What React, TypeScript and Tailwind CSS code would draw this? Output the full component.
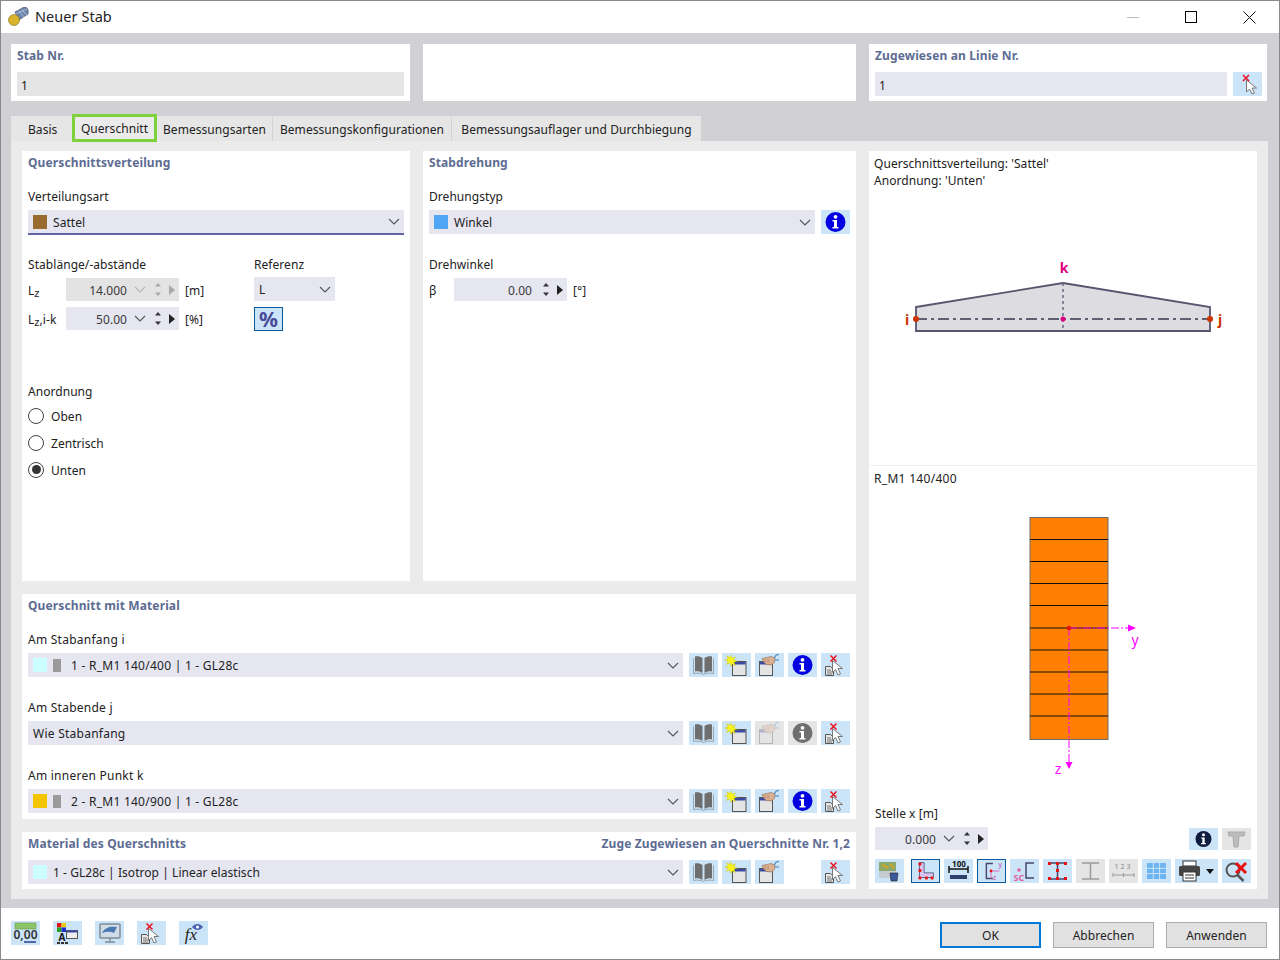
import React from "react";

const Chevron = ({ c = "#555" }: { c?: string }) => (
  <svg width="12" height="7" viewBox="0 0 12 7" className="shrink-0"><path d="M1 1l5 5 5-5" fill="none" stroke={c} strokeWidth="1.1" /></svg>
);

const Book = () => (
  <svg width="29" height="24" viewBox="0 0 29 24">
    <path d="M6 3.500C8.500 3 11.500 3.500 13.500 5V20C11.500 18.500 8.500 18 6 18.500z" fill="#6e6e6e" />
    <path d="M23 3.500C20.500 3 17.500 3.500 15.500 5V20C17.500 18.500 20.500 18 23 18.500z" fill="#6e6e6e" />
    <path d="M4.500 5.500V20.500C8 19.800 12 20 14.500 21.500 17 20 21 19.800 24.500 20.500V5.500" fill="none" stroke="#97a3ad" strokeWidth="1" />
  </svg>
);

const NewWin = () => (
  <svg width="29" height="24" viewBox="0 0 29 24">
    <rect x="10.500" y="8.500" width="13.500" height="14" fill="#e4e4e4" stroke="#555" />
    <rect x="11" y="9" width="12.500" height="2.500" fill="#3b4ba3" />
    <path d="M9 2l1.100 3.200 3.400-1.400-1.500 3.200 3.400 1.100-3.400 1.200 1.500 3.200-3.400-1.500L9 13.500 7.800 10 4.500 11.500 6 8.300 2.600 7.100 6 6 4.500 2.800l3.300 1.400z" fill="#f7f11d" stroke="#b9a90f" strokeWidth=".3" />
  </svg>
);

const EditWin = ({ off }: { off?: boolean }) => (
  <svg width="29" height="24" viewBox="0 0 29 24" opacity={off ? 0.32 : 1}>
    <rect x="4.500" y="8.500" width="13" height="14" fill="#e4e4e4" stroke="#555" />
    <rect x="5" y="9" width="12" height="2.500" fill="#3b4ba3" />
    <path d="M7 5.500l9-2 4 1.500-.5 4.500-3 2.500-5-.5-3-2.500z" fill="#dcae92" stroke="#8d6d58" strokeWidth=".6" />
    <path d="M10 6.500v3M13 6v3.500" stroke="#8d6d58" strokeWidth=".6" />
    <path d="M19.500 5c.5-2.500 2.500-3.500 4.500-3.500M20 7h4" stroke="#3f86c4" strokeWidth="1.200" fill="none" />
  </svg>
);

const Info = ({ c = "#0000e0", small }: { c?: string; small?: boolean }) => (
  <svg width="29" height="24" viewBox="0 0 29 24">
    <g transform={small ? "translate(2.900 2.400) scale(0.8)" : undefined}>
      <circle cx="14.500" cy="12" r="10" fill={c} />
      <circle cx="14.500" cy="6.800" r="1.900" fill="#fff" />
      <path d="M11.500 10h4.500v7h1.500v1.500h-6V17H13v-5.500h-1.500z" fill="#fff" />
    </g>
  </svg>
);

const CursorX = () => (
  <svg width="29" height="24" viewBox="0 0 29 24">
    <path d="M4.500 13.500h5l3 3v6h-8z" fill="#e8e8e8" stroke="#555" />
    <path d="M6 17h4M6 19h5M6 21h5" stroke="#555" strokeWidth=".8" />
    <path d="M11.500 7.500v12l3-3 2.500 5.500 2.500-1-2.500-5.500h4.500z" fill="#fff" stroke="#777" />
    <path d="M9.500 2.500l6 6M15.500 2.500l-6 6" stroke="#ee1122" strokeWidth="1.500" />
  </svg>
);

const Btn = ({ children, off, active, className = "" }: { children?: React.ReactNode; off?: boolean; active?: boolean; className?: string }) => (
  <div className={`w-[29px] h-[24px] shrink-0 flex items-center justify-center ${off ? "bg-[#e5e5e5]" : "bg-[#cce4f7]"} ${active ? "border border-[#0b5a9e]" : ""} ${className}`}>
    {children}
  </div>
);

const Combo = ({ children, className = "", underline }: { children: React.ReactNode; className?: string; underline?: boolean }) => (
  <div className={`h-[24px] bg-[#e6e6f1] flex items-center justify-between pr-[4px] ${underline ? "h-[25px] border-b-2 border-[#6264a7]" : ""} ${className}`}>
    <div className="flex items-center min-w-0 [&>span]:pt-[2px]">{children}</div>
    <Chevron />
  </div>
);

const Swatch = ({ c }: { c: string }) => <span className="block w-[14px] h-[14px] ml-[5px] mr-[6px]" style={{ background: c }} />;

const Spin = ({ value, off, noChevron }: { value: string; off?: boolean; noChevron?: boolean }) => {
  const c = off ? "#a9a9a9" : "#333";
  return (
    <div className={`w-[113px] h-[23px] flex items-center ${off ? "bg-[#e3e3e3]" : "bg-[#e6e6f1]"}`}>
      <span className={`${noChevron ? "w-[78px]" : "w-[61px]"} pt-[2px] text-right text-[#3a3a3a]`}>{value}</span>
      {!noChevron && <span className="ml-[7px]"><Chevron c={off ? "#b5b5b5" : "#555"} /></span>}
      <svg width="8" height="15" viewBox="0 0 8 15" className={noChevron ? "ml-[10px]" : "ml-[8px]"}>
        <path d="M4 1L7 4.500H1zM4 14L1 10.500H7z" fill={c} />
      </svg>
      <svg width="6" height="10" viewBox="0 0 6 10" className="ml-[7px]">
        <path d="M0 0l6 5-6 5z" fill={off ? "#a9a9a9" : "#222"} />
      </svg>
    </div>
  );
};

const Title = ({ children, className = "" }: { children: React.ReactNode; className?: string }) => (
  <div className={`h-[16px] leading-[18px] font-bold text-[#5d6c93] whitespace-nowrap tracking-[0.12px] ${className}`}>{children}</div>
);
const Label = ({ children, className = "" }: { children: React.ReactNode; className?: string }) => (
  <div className={`h-[16px] leading-[18px] ${className}`}>{children}</div>
);

const Radio = ({ label, on }: { label: string; on?: boolean }) => (
  <div className="h-[27px] flex items-center">
    <span className="w-[16px] h-[16px] rounded-full border border-[#444] flex items-center justify-center bg-white">
      {on && <span className="block w-[9px] h-[9px] rounded-full bg-[#333]" />}
    </span>
    <span className="ml-[7px] pt-[2px]">{label}</span>
  </div>
);

const MatRow = ({ label, children, editOff, first }: { label: string; children: React.ReactNode; editOff?: boolean; first?: boolean }) => (
  <div className={first ? "mt-[18px]" : "mt-[22px]"}>
    <Label className="tracking-[0.25px]">{label}</Label>
    <div className="flex gap-[4px] mt-[6px]">
      <Combo className="flex-1 mr-[2px] tracking-[0.25px]">{children}</Combo>
      <Btn><Book /></Btn>
      <Btn><NewWin /></Btn>
      <Btn off={editOff}><EditWin off={editOff} /></Btn>
      <Btn off={editOff}><Info c={editOff ? "#6f6f6f" : "#0000e0"} /></Btn>
      <Btn><CursorX /></Btn>
    </div>
  </div>
);

const Section = () => (
  <svg width="388" height="92" viewBox="0 0 388 92" className="block">
    <path d="M47 56L194 32 341 56V80H47z" fill="#dcdce1" stroke="#55566e" strokeWidth="1.800" />
    <path d="M47 68H341" stroke="#5f5f72" strokeWidth="1.800" strokeDasharray="11 4 3 4" />
    <path d="M194 32V80" stroke="#6a6a80" strokeWidth="1.500" strokeDasharray="3 3" />
    <circle cx="47" cy="68" r="3" fill="#cc3300" />
    <circle cx="341" cy="68" r="3" fill="#cc3300" />
    <circle cx="194" cy="68" r="2.500" fill="#e0007f" />
    <text x="195" y="22" textAnchor="middle" fontSize="14" fontWeight="700" fill="#e0007f">k</text>
    <text x="38" y="74" textAnchor="middle" fontSize="14" fontWeight="700" fill="#cc3300">i</text>
    <text x="351" y="74" textAnchor="middle" fontSize="14" fontWeight="700" fill="#cc3300">j</text>
  </svg>
);

const Profile = () => {
  const ys = [22.500, 44.500, 66.500, 88.500, 111, 133, 155, 177, 199];
  return (
    <svg width="388" height="270" viewBox="0 0 388 270" className="block">
      <rect x="161" y="0.500" width="78" height="222" fill="#ff8000" stroke="#6b6b6b" />
      {ys.map((y) => <path key={y} d={`M161 ${y}H239`} stroke="#111" strokeWidth="1" />)}
      <path d="M200 111H260" stroke="#f0f" strokeWidth="1" strokeDasharray="8 2 2 2" />
      <path d="M200 111V246" stroke="#f0f" strokeWidth="1" strokeDasharray="8 2 2 2" />
      <path d="M259 107.500l8 3.500-8 3.500zM196.500 245h7l-3.500 7z" fill="#f0f" />
      <circle cx="200" cy="111" r="2.200" fill="#e81010" />
      <text x="266" y="128" fontSize="14" fill="#f0f" textAnchor="middle" fontFamily="Noto Sans">y</text>
      <text x="189" y="257" fontSize="14" fill="#f0f" textAnchor="middle" fontFamily="Noto Sans">z</text>
    </svg>
  );
};

const Ico = ({ children }: { children: React.ReactNode }) => (
  <svg width="29" height="24" viewBox="0 0 29 24">{children}</svg>
);

function CursorXOnly() {
  return (
    <svg width="29" height="24" viewBox="0 0 29 24">
      <path d="M13.500 8v12l3-3 2.500 5 2.500-1-2.500-5h4.500z" fill="#fff" stroke="#777" />
      <path d="M10 3l6 6M16 3l-6 6" stroke="#ee1122" strokeWidth="1.500" />
    </svg>
  );
}

export default function App() {
  return (
    <div className="w-[1280px] h-[960px] flex flex-col border border-[#8a8a8a] bg-white overflow-hidden text-[12px] text-[#222] tracking-[0.05px] font-['Noto_Sans','Open_Sans',sans-serif]">
      {/* title bar */}
      <div className="h-[32px] shrink-0 flex items-center bg-white">
        <svg width="22" height="20" viewBox="0 0 22 20" className="ml-[7px]">
          <path d="M7 5l9-5c3-.5 5 3 4 7l-9 6z" fill="#6d86ad" stroke="#33415c" strokeWidth=".6" />
          <path d="M10 3l6 7M13 1.500l6 7M8 7l11-5" stroke="#c9d4e5" strokeWidth=".6" />
          <circle cx="6" cy="13" r="5.500" fill="#d9b52e" stroke="#7d6a1f" strokeWidth=".6" />
        </svg>
        <span className="ml-[5px] text-[14.500px] text-[#222]">Neuer Stab</span>
        <div className="ml-auto flex mr-px">
          <div className="w-[58px] h-[32px] flex items-center justify-center">
            <span className="block w-[12px] h-px bg-[#bdbdbd]" />
          </div>
          <div className="w-[58px] h-[32px] flex items-center justify-center">
            <span className="block w-[12px] h-[12px] border border-black" />
          </div>
          <div className="w-[58px] h-[32px] flex items-center justify-center">
            <svg width="13" height="13" viewBox="0 0 13 13"><path d="M.5.500l12 12M12.500.500l-12 12" stroke="#111" strokeWidth="1" /></svg>
          </div>
        </div>
      </div>

      {/* body */}
      <div className="flex-1 min-h-0 bg-[#d0d0d5] pl-[10px] pr-[11px] pt-[11px] pb-[9px] flex flex-col">
        <div className="grid grid-cols-[399px_433px_398px] gap-[13px] h-[57px] shrink-0">
          <div className="bg-white pl-[6px] pr-[5px] pt-[3px]">
            <Title className="tracking-[0.3px]">Stab Nr.</Title>
            <div className="mt-[9px] h-[24px] bg-[#e5e5e5] flex items-center pl-[4px] pt-[4px] mr-[1px]">1</div>
          </div>
          <div className="bg-white" />
          <div className="bg-white pl-[6px] pr-[5px] pt-[3px]">
            <Title className="tracking-[0.3px]">Zugewiesen an Linie Nr.</Title>
            <div className="mt-[9px] flex gap-[6px]">
              <div className="flex-1 h-[24px] bg-[#e6e6f1] flex items-center pl-[4px] pt-[4px]">1</div>
              <Btn><CursorXOnly /></Btn>
            </div>
          </div>
        </div>

        {/* tabs */}
        <div className="mt-[15px] h-[25px] shrink-0 flex">
          <div className="w-[61px] bg-[#e6e6e6] flex items-center pl-[17px] pt-[2px]">Basis</div>
          <div className="relative z-10 w-[85px] h-[28px] -mt-[2px] bg-[#ebebeb] border-[3px] border-[#7ed13b] flex items-center justify-center pt-[2px]">Querschnitt</div>
          <div className="w-[116px] bg-[#e6e6e6] border-r border-[#d4d4d4] flex items-center justify-center pt-[2px]">Bemessungsarten</div>
          <div className="w-[179px] bg-[#e6e6e6] border-r border-[#d4d4d4] flex items-center justify-center pt-[2px]">Bemessungskonfigurationen</div>
          <div className="w-[249px] bg-[#e6e6e6] flex items-center justify-center pt-[2px]">Bemessungsauflager und Durchbiegung</div>
        </div>

        {/* panel */}
        <div className="flex-1 min-h-0 bg-[#ebebeb] pl-[11px] pr-[10px] py-[10px] flex gap-[13px]">
          <div className="w-[834px] flex flex-col">
            <div className="h-[430px] flex gap-[13px]">
              {/* left */}
              <div className="w-[388px] bg-white px-[6px] pt-[3px]">
                <Title>Querschnittsverteilung</Title>
                <Label className="mt-[18px]">Verteilungsart</Label>
                <Combo underline className="mt-[6px]">
                  <Swatch c="#996a2f" /><span>Sattel</span>
                </Combo>
                <div className="flex mt-[21px]">
                  <div className="w-[226px]">
                    <Label>Stablänge/-abstände</Label>
                    <div className="flex items-center mt-[6px]">
                      <span className="w-[38px] pt-[2px]">L<sub className="text-[11px] align-baseline">z</sub></span>
                      <Spin value="14.000" off />
                      <span className="ml-[6px] pt-[2px]">[m]</span>
                    </div>
                    <div className="flex items-center mt-[6px]">
                      <span className="w-[38px] pt-[2px] whitespace-nowrap">L<sub className="text-[11px] align-baseline">z</sub>,i-k</span>
                      <Spin value="50.00" />
                      <span className="ml-[6px] pt-[2px]">[%]</span>
                    </div>
                  </div>
                  <div>
                    <Label>Referenz</Label>
                    <Combo className="w-[81px] mt-[5px]"><span className="pl-[5px]">L</span></Combo>
                    <Btn active className="mt-[6px]">
                      <span className="text-[21px] font-bold leading-none text-[#4a4a9a]">%</span>
                    </Btn>
                  </div>
                </div>
                <Label className="mt-[52px]">Anordnung</Label>
                <div className="mt-[3px]">
                  <Radio label="Oben" />
                  <Radio label="Zentrisch" />
                  <Radio label="Unten" on />
                </div>
              </div>
              {/* middle */}
              <div className="w-[433px] bg-white px-[6px] pt-[3px]">
                <Title>Stabdrehung</Title>
                <Label className="mt-[18px]">Drehungstyp</Label>
                <div className="flex gap-[6px] mt-[6px]">
                  <Combo className="flex-1"><Swatch c="#4fa6f5" /><span>Winkel</span></Combo>
                  <Btn><Info /></Btn>
                </div>
                <Label className="mt-[22px]">Drehwinkel</Label>
                <div className="flex items-center mt-[6px]">
                  <span className="w-[25px] pt-[2px]">β</span>
                  <Spin value="0.00" noChevron />
                  <span className="ml-[6px] pt-[2px]">[°]</span>
                </div>
              </div>
            </div>

            <div className="mt-[13px] h-[225px] bg-white px-[6px] pt-[3px]">
              <Title>Querschnitt mit Material</Title>
              <MatRow first label="Am Stabanfang i">
                <Swatch c="#ccffff" /><span className="block w-[8px] h-[13px] bg-[#9a9a9a] mr-[10px]" /><span>1 - R_M1 140/400 | 1 - GL28c</span>
              </MatRow>
              <MatRow label="Am Stabende j" editOff>
                <span className="pl-[5px]">Wie Stabanfang</span>
              </MatRow>
              <MatRow label="Am inneren Punkt k">
                <Swatch c="#f5c400" /><span className="block w-[8px] h-[13px] bg-[#9a9a9a] mr-[10px]" /><span>2 - R_M1 140/900 | 1 - GL28c</span>
              </MatRow>
            </div>

            <div className="mt-[13px] flex-1 bg-white px-[6px] pt-[3px]">
              <div className="flex justify-between">
                <Title>Material des Querschnitts</Title>
                <Title className="tracking-[0.2px]">Zuge Zugewiesen an Querschnitte Nr. 1,2</Title>
              </div>
              <div className="flex gap-[4px] mt-[9px]">
                <Combo className="flex-1 mr-[2px]"><Swatch c="#ccffff" /><span>1 - GL28c | Isotrop | Linear elastisch</span></Combo>
                <Btn><Book /></Btn>
                <Btn><NewWin /></Btn>
                <Btn><EditWin /></Btn>
                <div className="w-[29px]" />
                <Btn><CursorX /></Btn>
              </div>
            </div>
          </div>

          {/* right */}
          <div className="w-[388px] bg-white flex flex-col">
            <div className="h-[315px] border-b border-[#eeeeee] shrink-0">
              <div className="pl-[5px] pt-[4px] leading-[17px]">
                <div>Querschnittsverteilung: 'Sattel'</div>
                <div>Anordnung: 'Unten'</div>
              </div>
              <div className="mt-[62px]"><Section /></div>
            </div>
            <div className="pl-[5px] pt-[5px] h-[16px] leading-[16px] box-content tracking-[0.3px]">R_M1 140/400</div>
            <div className="mt-[30px]"><Profile /></div>
            <div className="pl-[6px] mt-[18px]">
              <Label>Stelle x [m]</Label>
              <div className="flex items-center mt-[6px] pr-[6px]">
                <Spin value="0.000" />
                <Btn className="ml-auto !h-[22px]"><Info c="#101b40" small /></Btn>
                <Btn off className="ml-[4px] !h-[22px]">
                  <svg width="29" height="24" viewBox="0 0 29 24"><path d="M6 5h17l-1 4h-5l-1 11h-4l-1-11H7z" fill="#bdbdbd" stroke="#ababab" /></svg>
                </Btn>
              </div>
              <div className="flex items-center mt-[9px] pr-[6px]">
                <Btn>
                  <Ico>
                    <rect x="4" y="3" width="17" height="16" fill="#8aa96a" /><rect x="4" y="12" width="17" height="7" fill="#c6cdd1" />
                    <path d="M7 6l6 3M15 5l4 4" stroke="#d2a52a" strokeWidth="2" />
                    <path d="M15 14h8l-1 8h-6z" fill="#3a5a9a" stroke="#222" strokeWidth=".6" />
                  </Ico>
                </Btn>
                <Btn active className="ml-[7px]">
                  <Ico><path d="M8 3h5v11h10v5H8z" fill="#d9c6ee" stroke="#3c3c70" strokeWidth=".8" />
                    <g fill="#e81010"><rect x="7" y="3" width="3" height="3" /><rect x="7" y="10" width="3" height="3" /><rect x="7" y="18" width="3" height="3" /><rect x="14" y="18" width="3" height="3" /><rect x="20" y="18" width="3" height="3" /></g></Ico>
                </Btn>
                <Btn className="ml-[4px]">
                  <Ico><path d="M5 10h19M5 7v7M24 7v7" stroke="#111" strokeWidth="1.500" /><rect x="6" y="16" width="17" height="4" fill="#2f3f6b" /><text x="15" y="8" textAnchor="middle" fontSize="8" fontWeight="700" fill="#111">100</text></Ico>
                </Btn>
                <Btn active className="ml-[4px]">
                  <Ico><path d="M16 4H9v16h7" fill="none" stroke="#45456e" strokeWidth="1.500" /><path d="M14 12h9M14 12v8" stroke="#e060c0" strokeWidth="1" /><circle cx="14" cy="12" r="1.500" fill="#e81010" /><text x="22" y="8" fontSize="7" fill="#c040b0">y</text><text x="16" y="22" fontSize="7" fill="#c040b0">z</text></Ico>
                </Btn>
                <Btn className="ml-[4px]">
                  <Ico><path d="M24 4h-8v15h8" fill="none" stroke="#45456e" strokeWidth="1.500" /><circle cx="9" cy="11" r="1.800" fill="#e060a0" /><text x="9" y="22" textAnchor="middle" fontSize="9" fontWeight="700" fill="#e060a0">SC</text></Ico>
                </Btn>
                <Btn className="ml-[4px]">
                  <Ico><path d="M6 4h17M6 20h17M14.500 4v16" stroke="#45456e" strokeWidth="1.500" /><g fill="#e81010"><rect x="5" y="3" width="3" height="3" /><rect x="13" y="3" width="3" height="3" /><rect x="21" y="3" width="3" height="3" /><rect x="13" y="10" width="3" height="3" /><rect x="5" y="18" width="3" height="3" /><rect x="13" y="18" width="3" height="3" /><rect x="21" y="18" width="3" height="3" /></g></Ico>
                </Btn>
                <Btn off className="ml-[4px]">
                  <Ico><path d="M6 4h17M6 20h17M14.500 4v16" stroke="#9a9a9a" strokeWidth="1.500" /></Ico>
                </Btn>
                <Btn off className="ml-[4px]">
                  <Ico><path d="M4 16h21M4 14v4M25 14v4M14.500 14v4" stroke="#9a9a9a" /><text x="14.500" y="10" textAnchor="middle" fontSize="7" letterSpacing="2" fill="#8a8a8a">123</text></Ico>
                </Btn>
                <Btn className="ml-[4px]">
                  <Ico><rect x="5" y="4" width="19" height="16" fill="#6cb4f2" /><path d="M5 9.300h19M5 14.600h19M11.300 4v16M17.600 4v16" stroke="#cce4f7" /></Ico>
                </Btn>
                <div className="ml-[4px] w-[43px] h-[24px] bg-[#cce4f7] flex items-center pl-[2px]">
                  <svg width="40" height="24" viewBox="0 0 40 24">
                    <rect x="6" y="2" width="13" height="5" fill="#fff" stroke="#333" /><rect x="2" y="7" width="21" height="10" rx="1.500" fill="#444" /><rect x="6" y="13" width="13" height="9" fill="#fff" stroke="#333" /><path d="M8 16h9M8 19h9" stroke="#333" />
                    <path d="M29 10h8l-4 5z" fill="#111" />
                  </svg>
                </div>
                <Btn className="ml-[4px]">
                  <Ico><circle cx="11" cy="11" r="6.500" fill="none" stroke="#555" strokeWidth="2" /><path d="M15.500 16l6 6" stroke="#555" strokeWidth="2.500" /><path d="M14 4l10 10M24 4L14 14" stroke="#e81010" strokeWidth="3" /></Ico>
                </Btn>
              </div>
            </div>
          </div>
        </div>
      </div>

      {/* footer */}
      <div className="h-[51px] shrink-0 bg-white flex pl-[10px] pr-[12px]">
        <div className="flex gap-[13px] mt-[13px]">
          <Btn>
            <Ico><rect x="4" y="2" width="21" height="6" fill="#8cc46a" stroke="#5f9c47" strokeWidth=".6" /><text x="14.500" y="18" textAnchor="middle" fontSize="12" fontWeight="600" fill="#333">0,00</text><path d="M13 21h12" stroke="#2a3f8f" strokeWidth="1.500" /></Ico>
          </Btn>
          <Btn>
            <Ico><rect x="4" y="2" width="4.500" height="4.500" fill="#e81010" /><rect x="8.500" y="2" width="4.500" height="4.500" fill="#e8c810" /><rect x="4" y="6.500" width="4.500" height="4.500" fill="#2aa02a" /><rect x="8.500" y="6.500" width="4.500" height="4.500" fill="#2030d0" /><rect x="13.500" y="9.500" width="11" height="8" fill="#eee" stroke="#555" /><rect x="14" y="9.500" width="10.500" height="2" fill="#3b4ba3" /><text x="9" y="20" textAnchor="middle" fontSize="10" fontWeight="700" fill="#111">A</text><path d="M4 22h12" stroke="#333" strokeWidth="2" strokeDasharray="3 1" /></Ico>
          </Btn>
          <Btn>
            <Ico><rect x="5" y="3" width="20" height="14" rx="1" fill="#d0dde8" stroke="#7f8a94" strokeWidth="1.500" /><path d="M7 12c3-6 9-7 15-6l-3 6c-4-2-8-1-12 0z" fill="#4a78b0" /><path d="M15 17v3M10 21h10" stroke="#7f8a94" strokeWidth="1.500" /></Ico>
          </Btn>
          <Btn><CursorX /></Btn>
          <Btn>
            <Ico><text x="12" y="19" textAnchor="middle" fontSize="17" fontStyle="italic" fontFamily="Liberation Serif" fill="#222">fx</text><path d="M13 6c3-4 8-4 11 0-3 4-8 4-11 0z" fill="#4a62b0" /><circle cx="18.500" cy="6" r="1.500" fill="#fff" /></Ico>
          </Btn>
        </div>
        <div className="ml-auto flex gap-[12px] mt-[14px]">
          <div className="w-[101px] h-[26px] border-2 border-[#0078d7] bg-[#e1e1e1] flex items-center justify-center pt-[2px]">OK</div>
          <div className="w-[101px] h-[26px] border border-[#adadad] bg-[#e1e1e1] flex items-center justify-center pt-[2px]">Abbrechen</div>
          <div className="w-[101px] h-[26px] border border-[#adadad] bg-[#e1e1e1] flex items-center justify-center pt-[2px]">Anwenden</div>
        </div>
      </div>
    </div>
  );
}
